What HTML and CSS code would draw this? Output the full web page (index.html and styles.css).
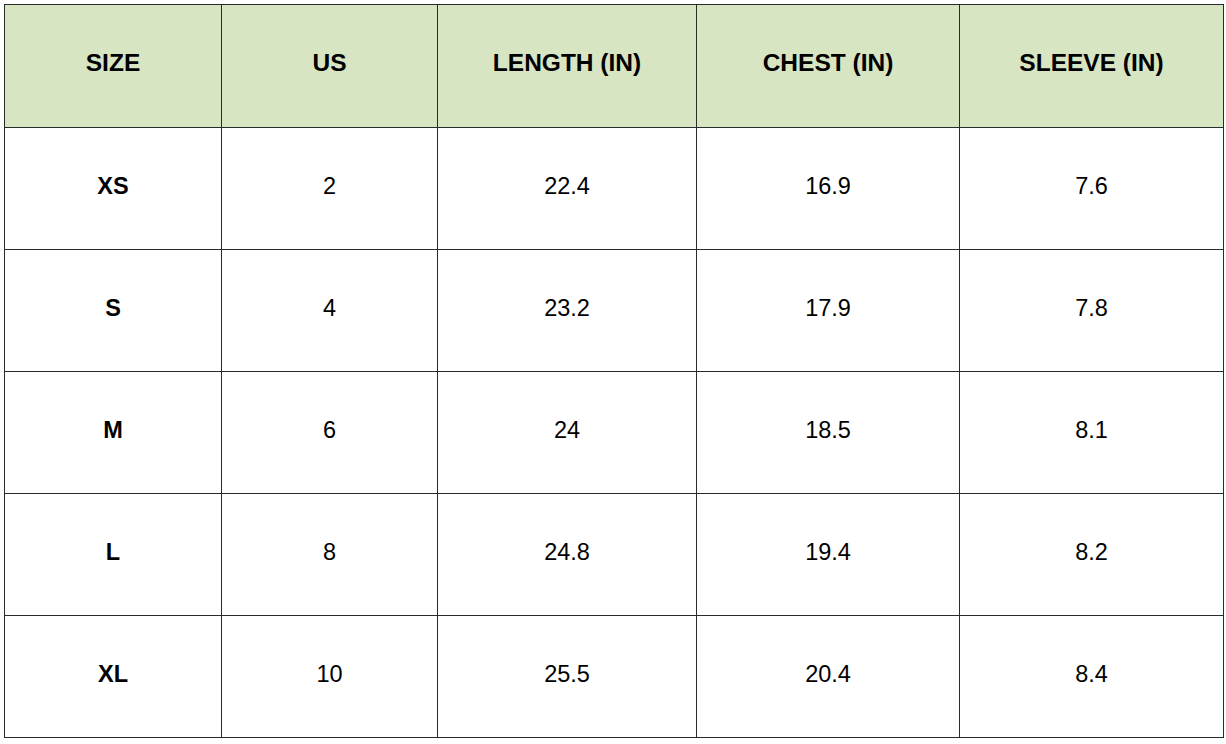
FILE: index.html
```html
<!DOCTYPE html>
<html>
<head>
<meta charset="utf-8">
<link rel="stylesheet" href="styles.css">
</head>
<body>
<table class="chart">
  <colgroup>
    <col class="c1"><col class="c2"><col class="c3"><col class="c4"><col class="c5">
  </colgroup>
  <thead>
    <tr><th>SIZE</th><th>US</th><th>LENGTH (IN)</th><th>CHEST (IN)</th><th>SLEEVE (IN)</th></tr>
  </thead>
  <tbody>
    <tr><td class="sz">XS</td><td>2</td><td>22.4</td><td>16.9</td><td>7.6</td></tr>
    <tr><td class="sz">S</td><td>4</td><td>23.2</td><td>17.9</td><td>7.8</td></tr>
    <tr><td class="sz">M</td><td>6</td><td>24</td><td>18.5</td><td>8.1</td></tr>
    <tr><td class="sz">L</td><td>8</td><td>24.8</td><td>19.4</td><td>8.2</td></tr>
    <tr><td class="sz">XL</td><td>10</td><td>25.5</td><td>20.4</td><td>8.4</td></tr>
  </tbody>
</table>
</body>
</html>
```
FILE: styles.css
```css
html, body {
  margin: 0;
  padding: 0;
  background: #ffffff;
}
body {
  padding: 4px 0 0 4px;
  font-family: "Liberation Sans", Arial, sans-serif;
  color: #000;
}
.chart {
  border-collapse: collapse;
  table-layout: fixed;
  width: 1219px;
}
.c1 { width: 217px; }
.c2 { width: 216px; }
.c3 { width: 259px; }
.c4 { width: 263px; }
.c5 { width: 264px; }
.chart th,
.chart td {
  border: 1px solid #2a2a2a;
  height: 122px;
  padding: 0 0 4px 0;
  text-align: center;
  vertical-align: middle;
  font-size: 23.5px;
  box-sizing: border-box;
}
.chart th {
  height: 123px;
  padding-bottom: 6px;
  background: #d8e5c3;
  font-weight: bold;
  font-size: 24.5px;
}
.chart td.sz {
  font-weight: bold;
}
```
